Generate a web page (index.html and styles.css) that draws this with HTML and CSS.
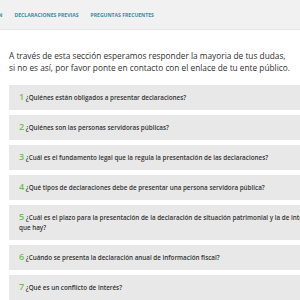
FILE: index.html
```html
<!DOCTYPE html>
<html lang="es">
<head>
<meta charset="utf-8">
<link rel="stylesheet" href="styles.css">
</head>
<body>
<nav class="nav">
  <a class="nav-item first">INFORMACIÓN</a>
  <a class="nav-item">DECLARACIONES PREVIAS</a>
  <a class="nav-item">PREGUNTAS FRECUENTES</a>
</nav>
<main class="content">
  <p class="intro">A través de esta sección esperamos responder la mayoria de tus dudas,<br>si no es así, por favor ponte en contacto con el enlace de tu ente público.</p>
  <ul class="faq">
    <li class="q"><span class="n">1</span> ¿Quiénes están obligados a presentar declaraciones?</li>
    <li class="q"><span class="n">2</span> ¿Quiénes son las personas servidoras públicas?</li>
    <li class="q"><span class="n">3</span> ¿Cuál es el fundamento legal que la regula la presentación de las declaraciones?</li>
    <li class="q"><span class="n">4</span> ¿Qué tipos de declaraciones debe de presentar una persona servidora pública?</li>
    <li class="q"><span class="n">5</span> ¿Cuál es el plazo para la presentación de la declaración de situación patrimonial y la de intereses que hay?</li>
    <li class="q"><span class="n">6</span> ¿Cuándo se presenta la declaración anual de información fiscal?</li>
    <li class="q"><span class="n">7</span> ¿Qué es un conflicto de interés?</li>
  </ul>
</main>
</body>
</html>
```
FILE: styles.css
```css
html, body {
  margin: 0;
  padding: 0;
  overflow: hidden;
  background: #ffffff;
}
body {
  width: 300px;
  font-family: "Open Sans", "Liberation Sans", sans-serif;
  color: #333333;
}
.nav {
  display: flex;
  align-items: center;
  gap: 12px;
  height: 30px;
  background: #f1f1f1;
  border-bottom: 1px solid #e6e6e6;
  margin-left: -35px;
  width: 380px;
  box-sizing: border-box;
}
.nav-item {
  font-size: 5.1px;
  font-weight: 700;
  color: #3d8aa0;
  white-space: nowrap;
}
.content {
  padding: 0 0 0 9px;
  width: 400px;
}
.intro {
  margin: 20px 0 12px 0;
  font-size: 8.3px;
  line-height: 11.5px;
  color: #2f2f2f;
}
.faq {
  list-style: none;
  margin: 0;
  padding: 0;
  display: flex;
  flex-direction: column;
  gap: 5px;
}
.q {
  background: #e8e8e8;
  padding: 7px 10px;
  font-size: 6.3px;
  font-weight: 600;
  line-height: 10px;
  color: #333333;
  min-height: 11px;
  max-width: 310px;
}
.n {
  color: #6cc04a;
  font-size: 9px;
  font-weight: 600;
  line-height: 10px;
}
```
